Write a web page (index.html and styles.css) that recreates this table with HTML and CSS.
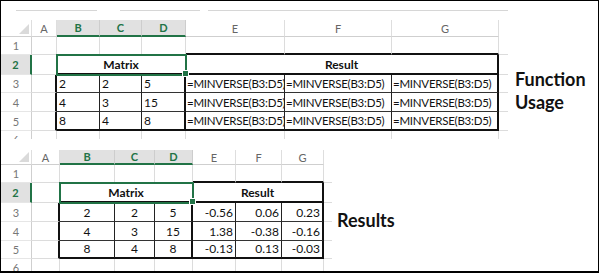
FILE: index.html
```html
<!DOCTYPE html>
<html>
<head>
<meta charset="utf-8">
<link rel="stylesheet" href="styles.css">
</head>
<body>
<div class="frame">
  <div class="ribbon">
    <span class="seg s1"></span><span class="seg s2"></span><span class="seg s3"></span>
  </div>

  <div class="sec sec1">
    <div class="grid g1">
      <div class="ch corner"><span class="tri"></span></div>
      <div class="ch">A</div><div class="ch sel">B</div><div class="ch sel">C</div><div class="ch sel">D</div>
      <div class="ch">E</div><div class="ch">F</div><div class="ch">G</div><div class="ch stub"></div>

      <div class="rh">1</div>
      <div class="c"></div><div class="c"></div><div class="c"></div><div class="c"></div>
      <div class="c bB"></div><div class="c bB"></div><div class="c bB"></div><div class="c stub"></div>

      <div class="rh sel">2</div>
      <div class="c"></div>
      <div class="c m3 selbox bB ctr b">Matrix</div>
      <div class="c m3 bR bB ctr b">Result</div>
      <div class="c stub"></div>

      <div class="rh">3</div>
      <div class="c bR"></div>
      <div class="c iR iB">2</div><div class="c iR iB">2</div><div class="c bR iB">5</div>
      <div class="c iR iB f">=MINVERSE(B3:D5)</div><div class="c iR iB f">=MINVERSE(B3:D5)</div><div class="c bR iB f">=MINVERSE(B3:D5)</div>
      <div class="c stub"></div>

      <div class="rh">4</div>
      <div class="c bR"></div>
      <div class="c iR iB">4</div><div class="c iR iB">3</div><div class="c bR iB">15</div>
      <div class="c iR iB f">=MINVERSE(B3:D5)</div><div class="c iR iB f">=MINVERSE(B3:D5)</div><div class="c bR iB f">=MINVERSE(B3:D5)</div>
      <div class="c stub"></div>

      <div class="rh">5</div>
      <div class="c bR"></div>
      <div class="c iR bB">8</div><div class="c iR bB">4</div><div class="c bR bB">8</div>
      <div class="c iR bB f">=MINVERSE(B3:D5)</div><div class="c iR bB f">=MINVERSE(B3:D5)</div><div class="c bR bB f">=MINVERSE(B3:D5)</div>
      <div class="c stub"></div>

      <div class="rh">6</div>
      <div class="c"></div><div class="c"></div><div class="c"></div><div class="c"></div>
      <div class="c"></div><div class="c"></div><div class="c"></div><div class="c stub"></div>
    </div>
    <div class="label label1">Function<br>Usage</div>
  </div>

  <div class="sec sec2">
    <div class="grid g2">
      <div class="ch corner"><span class="tri"></span></div>
      <div class="ch">A</div><div class="ch sel">B</div><div class="ch sel">C</div><div class="ch sel">D</div>
      <div class="ch">E</div><div class="ch">F</div><div class="ch">G</div><div class="ch stub"></div>

      <div class="rh">1</div>
      <div class="c"></div><div class="c"></div><div class="c"></div><div class="c"></div>
      <div class="c bB"></div><div class="c bB"></div><div class="c bB"></div><div class="c stub"></div>

      <div class="rh sel">2</div>
      <div class="c"></div>
      <div class="c m3 selbox bB ctr b">Matrix</div>
      <div class="c m3 bR bB ctr b">Result</div>
      <div class="c stub"></div>

      <div class="rh">3</div>
      <div class="c bR"></div>
      <div class="c iR iB ctr">2</div><div class="c iR iB ctr">2</div><div class="c bR iB ctr">5</div>
      <div class="c iR iB rt">-0.56</div><div class="c iR iB rt">0.06</div><div class="c bR iB rt">0.23</div>
      <div class="c stub"></div>

      <div class="rh">4</div>
      <div class="c bR"></div>
      <div class="c iR iB ctr">4</div><div class="c iR iB ctr">3</div><div class="c bR iB ctr">15</div>
      <div class="c iR iB rt">1.38</div><div class="c iR iB rt">-0.38</div><div class="c bR iB rt">-0.16</div>
      <div class="c stub"></div>

      <div class="rh">5</div>
      <div class="c bR"></div>
      <div class="c iR bB ctr">8</div><div class="c iR bB ctr">4</div><div class="c bR bB ctr">8</div>
      <div class="c iR bB rt">-0.13</div><div class="c iR bB rt">0.13</div><div class="c bR bB rt">-0.03</div>
      <div class="c stub"></div>

      <div class="rh">6</div>
      <div class="c"></div><div class="c"></div><div class="c"></div><div class="c"></div>
      <div class="c"></div><div class="c"></div><div class="c"></div><div class="c stub"></div>
    </div>
    <div class="label label2">Results</div>
  </div>
</div>
</body>
</html>
```

FILE: styles.css
```css
* { box-sizing: border-box; }
html, body { margin: 0; padding: 0; background: #fff; }
body { font-family: "Lato", "Open Sans", sans-serif; color: #000; }

.frame {
  width: 599px;
  height: 273px;
  border: 1px solid #000;
  border-bottom-width: 2px;
  background: #fff;
  overflow: hidden;
}

.ribbon {
  display: flex;
  height: 1px;
  margin-top: 9px;
}
.seg { display: block; height: 1px; background: #d6d6d6; }
.s1 { margin-left: 15px; width: 81px; }
.s2 { margin-left: 23px; width: 80px; }
.s3 { margin-left: 8px; width: 300px; }

.sec { display: flex; align-items: flex-start; overflow: hidden; }
.sec1 { margin-top: 9px; height: 119px; }
.sec2 { margin-top: 11px; height: 121px; }

.grid { display: grid; flex: none; }
.g1 {
  grid-template-columns: 31px 25px 43px 42px 44px 99px 107px 107px 9px;
  grid-template-rows: 17px 18px 20px 18px 19px 19px 18px;
}
.g2 {
  grid-template-columns: 31px 28px 55px 40px 38px 43px 46px 42px 8px;
  grid-template-rows: 15px 18px 20px 19px 19px 18px 18px;
}

/* column headers */
.ch {
  display: flex;
  align-items: center;
  justify-content: center;
  font-size: 11px;
  color: #666;
  border-right: 1px solid #dedede;
  border-bottom: 1px solid #cfcfcf;
}
.ch.sel {
  background: #e1e1e1;
  color: #217346;
  font-weight: 700;
  border-right-color: #cdcdcd;
  border-bottom: 2px solid #217346;
}
.ch.stub { border: none; }
.corner { justify-content: flex-end; align-items: flex-end; padding: 0 2px 2px 0; }
.tri {
  width: 0; height: 0;
  border-left: 10px solid transparent;
  border-bottom: 10px solid #dadada;
}

/* row headers */
.rh {
  display: flex;
  align-items: center;
  justify-content: center;
  font-size: 11px;
  color: #777;
  border-right: 1px solid #cfcfcf;
  border-bottom: 1px solid #e6e6e6;
}
.rh.sel {
  background: #e1e1e1;
  color: #217346;
  font-weight: 700;
  border-right: 2px solid #217346;
}

/* cells */
.c {
  display: flex;
  align-items: flex-end;
  padding: 0 2px 1px 2px;
  font-size: 12px;
  line-height: 15px;
  white-space: nowrap;
  overflow: hidden;
  border-right: 1px solid #dcdcdc;
  border-bottom: 1px solid #dcdcdc;
  color: #111;
}
.c.f { font-size: 11.5px; letter-spacing: -0.25px; padding-left: 1px; }
.c.stub { border-right: none; }
.m3 { grid-column: span 3; }
.ctr { justify-content: center; }
.rt { justify-content: flex-end; }
.b { font-weight: 700; }

.bR { border-right: 2px solid #111; }
.bB { border-bottom: 2px solid #111; }
.iR { border-right: 1px solid #222; }
.iB { border-bottom: 1px solid #333; }

.selbox {
  position: relative;
  z-index: 2;
  overflow: visible;
  outline: 2px solid #217346;
  outline-offset: -1px;
}
.selbox::after {
  content: "";
  position: absolute;
  right: -4px;
  bottom: -4px;
  width: 5px;
  height: 5px;
  background: #217346;
  border: 1px solid #fff;
}

.label {
  font-weight: 700;
  font-size: 18px;
  line-height: 23px;
  color: #111;
}
.label1 { margin-left: 7px; padding-top: 48px; }
.label2 { margin-left: 5px; padding-top: 59px; }
```
